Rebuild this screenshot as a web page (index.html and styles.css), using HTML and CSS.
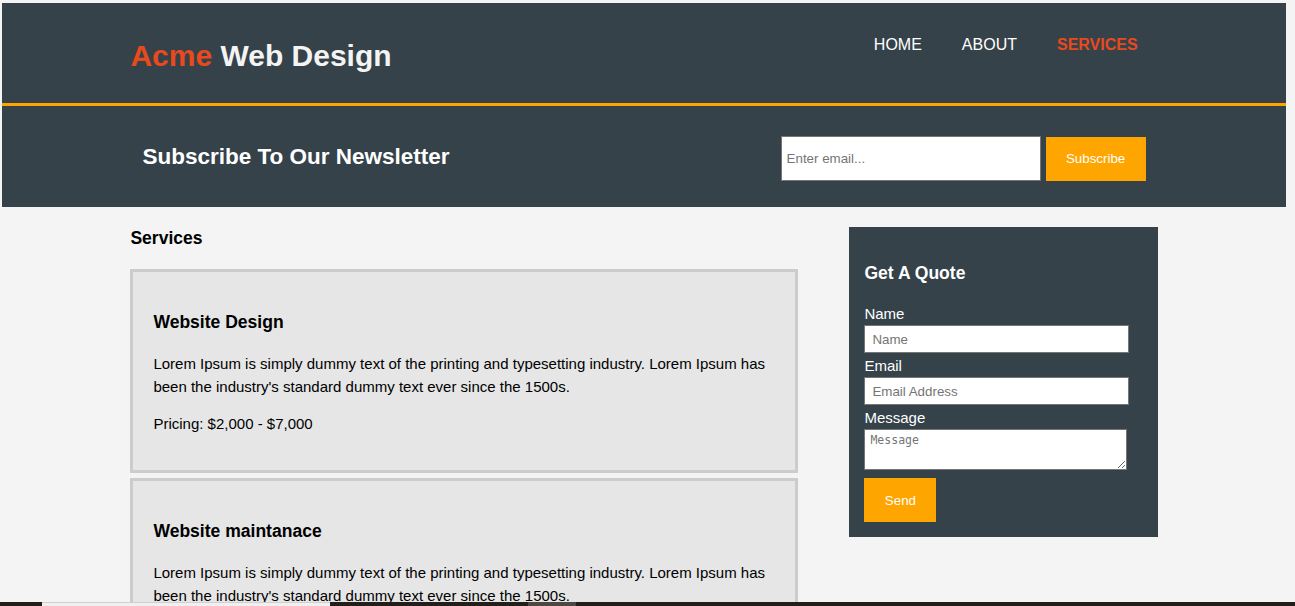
FILE: index.html
```html
<!DOCTYPE html>
<html lang="en">
<head>
<meta charset="utf-8">
<title>Acme Web Design | Services</title>
<link rel="stylesheet" href="styles.css">
</head>
<body>
<div class="page">
  <header class="site-header">
    <div class="container header-inner">
      <h1 class="brand"><span class="highlight">Acme</span> Web Design</h1>
      <nav class="nav">
        <ul>
          <li><a href="#">Home</a></li>
          <li><a href="#">About</a></li>
          <li class="current"><a href="#">Services</a></li>
        </ul>
      </nav>
    </div>
  </header>

  <section class="newsletter">
    <div class="container newsletter-inner">
      <h1 class="newsletter-title">Subscribe To Our Newsletter</h1>
      <form class="newsletter-form">
        <input class="email-input" type="email" placeholder="Enter email...">
        <button class="btn btn-subscribe" type="button">Subscribe</button>
      </form>
    </div>
  </section>

  <div class="container main-row">
    <main class="services">
      <h3 class="page-title">Services</h3>
      <article class="service">
        <h3>Website Design</h3>
        <p>Lorem Ipsum is simply dummy text of the printing and typesetting industry. Lorem Ipsum has been the industry's standard dummy text ever since the 1500s.</p>
        <p>Pricing: $2,000 - $7,000</p>
      </article>
      <article class="service">
        <h3>Website maintanace</h3>
        <p>Lorem Ipsum is simply dummy text of the printing and typesetting industry. Lorem Ipsum has been the industry's standard dummy text ever since the 1500s.</p>
        <p>Pricing: $250 per month</p>
      </article>
    </main>

    <aside class="quote">
      <h3>Get A Quote</h3>
      <form class="quote-form">
        <label class="quote-label">Name</label>
        <input class="quote-input" type="text" placeholder="Name">
        <label class="quote-label">Email</label>
        <input class="quote-input" type="email" placeholder="Email Address">
        <label class="quote-label">Message</label>
        <textarea class="quote-textarea" placeholder="Message"></textarea>
        <button class="btn btn-send" type="button">Send</button>
      </form>
    </aside>
  </div>
</div>

<div class="taskbar">
  <span class="tb-seg tb-dark tb-a"></span>
  <span class="tb-seg tb-light tb-b"></span>
  <span class="tb-seg tb-dark tb-c"></span>
  <span class="tb-seg tb-gray tb-d"></span>
  <span class="tb-seg tb-dark tb-e"></span>
</div>
</body>
</html>
```

FILE: styles.css
```css
html, body {
  margin: 0;
  padding: 0;
}

body {
  background: #f4f4f4;
  font-family: "Liberation Sans", Arial, sans-serif;
  font-size: 15px;
  line-height: 1.5;
  color: #000;
}

.page {
  margin: 3px 9px 0 2px;
}

.container {
  width: 80%;
  margin: 0 auto;
}

/* Header */
.site-header {
  background: #35424a;
  color: #fff;
  padding-top: 28px;
  height: 72px;
  border-bottom: 3px solid #ffa500;
}

.header-inner {
  display: flex;
  justify-content: space-between;
  align-items: flex-start;
}

.brand {
  margin: 2px 0 0;
  font-size: 30px;
  font-weight: bold;
  line-height: 45px;
  color: #f4f4f4;
}

.highlight {
  color: #e8491d;
}

.nav {
  margin-top: 2px;
}

.nav ul {
  display: flex;
  list-style: none;
  margin: 0;
  padding: 0;
}

.nav li {
  padding: 0 20px;
}

.nav a {
  color: #fff;
  text-decoration: none;
  text-transform: uppercase;
  font-size: 16px;
  line-height: 24px;
}

.nav .current a {
  color: #e8491d;
  font-weight: bold;
}

/* Newsletter */
.newsletter {
  background: #35424a;
  color: #fff;
  height: 101px;
}

.newsletter-inner {
  display: flex;
  justify-content: space-between;
  align-items: center;
  height: 100%;
  box-sizing: border-box;
  padding: 0 12px;
}

.newsletter-title {
  margin: 0;
  font-size: 22.5px;
  font-weight: bold;
  line-height: 1.5;
}

.newsletter-form {
  display: flex;
  align-items: flex-end;
  gap: 5px;
  margin-top: 3px;
}

.email-input {
  box-sizing: border-box;
  width: 260px;
  height: 45px;
  padding: 0 5px;
  border: 1px solid #767676;
  font-family: "Liberation Sans", Arial, sans-serif;
  font-size: 13.33px;
  background: #fff;
  outline: none;
}

.email-input::placeholder,
.quote-input::placeholder,
.quote-textarea::placeholder {
  color: #757575;
}

.btn {
  border: 0;
  background: #ffa500;
  color: #fff;
  font-family: "Liberation Sans", Arial, sans-serif;
  font-size: 13.33px;
  cursor: pointer;
  padding: 0;
}

.btn-subscribe {
  width: 100px;
  height: 44px;
}

/* Main */
.main-row {
  display: flex;
  justify-content: space-between;
  align-items: flex-start;
}

.services {
  width: 65%;
}

.page-title {
  font-size: 17.55px;
  margin: 18px 0 17.5px;
  line-height: 1.5;
}

.service {
  background: #e6e6e6;
  border: 3px solid #ccc;
  padding: 20px;
  margin-bottom: 5px;
}

.service h3 {
  font-size: 17.55px;
  line-height: 1.5;
  margin: 17.55px 0;
}

.service p {
  margin: 15px 0 14px;
}

.service h3 + p {
  margin-top: 0;
}

.service p + p {
  margin-top: 15px;
}

/* Quote sidebar */
.quote {
  width: 30%;
  box-sizing: border-box;
  margin-top: 20px;
  background: #35424a;
  color: #fff;
  padding: 15px;
}

.quote h3 {
  font-size: 17.55px;
  line-height: 1.5;
  margin: 18px 0 16px;
}

.quote-form {
  display: flex;
  flex-direction: column;
  align-items: flex-start;
}

.quote-label {
  display: block;
  line-height: 23px;
  font-size: 15px;
}

.quote-input {
  box-sizing: border-box;
  width: 265px;
  height: 28px;
  padding: 0 7px;
  margin: 0 0 1px;
  border: 1px solid #767676;
  background: #fff;
  font-family: "Liberation Sans", Arial, sans-serif;
  font-size: 13.33px;
  outline: none;
}

.quote-textarea {
  box-sizing: border-box;
  display: block;
  width: 263px;
  height: 41px;
  padding: 3px 5px;
  margin: 0 0 8px;
  border: 1px solid #767676;
  background: #fff;
  font-family: "DejaVu Sans Mono", "Liberation Mono", monospace;
  font-size: 11.5px;
}

.btn-send {
  width: 72px;
  height: 44px;
}

/* Taskbar strip at bottom edge */
.taskbar {
  position: fixed;
  left: 0;
  right: 0;
  bottom: 0;
  height: 4px;
  display: flex;
}

.tb-seg {
  display: block;
  height: 100%;
}

.tb-dark { background: #221e1a; }
.tb-light { background: #f0f0f0; border-top: 1px solid #cfcfcf; box-sizing: border-box; }
.tb-gray { background: #4d4842; }

.tb-a { width: 42px; }
.tb-b { width: 288px; }
.tb-c { width: 198px; }
.tb-d { width: 48px; }
.tb-e { flex: 1; }
```
